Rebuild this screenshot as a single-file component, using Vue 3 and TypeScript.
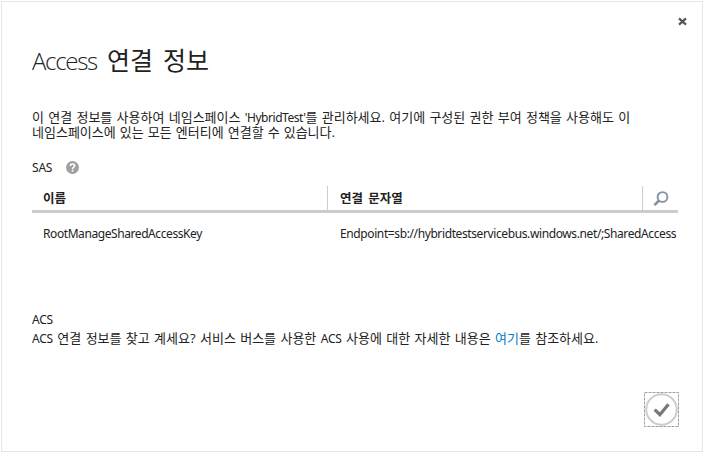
<script setup lang="ts">
interface Credential {
  name: string
  connection: string
}

const credentials: Credential[] = [
  {
    name: 'RootManageSharedAccessKey',
    connection: 'Endpoint=sb://hybridtestservicebus.windows.net/;SharedAccess',
  },
]
</script>

<template>
  <main class="dialog">
    <button class="close" aria-label="닫기">
      <svg width="9" height="9" viewBox="0 0 9 9"><path d="M1 1.4 8 7.6M8 1.4 1 7.6" /></svg>
    </button>
    <h1><span class="light">Access</span> 연결 정보</h1>
    <p class="intro">이 연결 정보를 사용하여 네임스페이스 <span class="latin">'HybridTest'</span>를 관리하세요. 여기에 구성된 권한 부여 정책을 사용해도 이<br /><span class="second">네임스페이스에 있는 모든 엔터티에 연결할 수 있습니다.</span></p>
    <div class="section">
      <span class="latin caps">SAS</span>
      <svg class="help" width="13" height="13" viewBox="0 0 13 13">
        <circle cx="6.5" cy="6.5" r="6.5" fill="#a0a0a0" />
        <path d="M4.4 4.9C4.4 2.4 8.6 2.4 8.6 4.7 8.6 6.2 6.6 6.1 6.6 7.9" fill="none" stroke="#fff" stroke-width="1.7" />
        <rect x="5.7" y="8.8" width="1.8" height="1.7" fill="#fff" />
      </svg>
    </div>
    <div class="table">
      <div class="row head">
        <div class="cell">이름</div>
        <div class="cell divided">연결 문자열</div>
        <div class="search">
          <svg width="16" height="16" viewBox="0 0 16 16">
            <circle cx="9.5" cy="6" r="4.9" />
            <path class="handle" d="M6 9.5 1.4 14.1" />
          </svg>
        </div>
      </div>
      <div v-for="item in credentials" :key="item.name" class="row body">
        <div class="cell latin key">{{ item.name }}</div>
        <div class="cell latin endpoint">{{ item.connection }}</div>
      </div>
    </div>
    <div class="acs">
      <p class="latin caps">ACS</p>
      <p class="info"><span class="latin caps">ACS</span> 연결 정보를 찾고 계세요? 서비스 버스를 사용한 <span class="latin caps">ACS</span> 사용에 대한 자세한 내용은 <a>여기</a>를 참조하세요.</p>
    </div>
    <button class="confirm" aria-label="확인">
      <svg width="35" height="35" viewBox="0 0 35 35">
        <rect x=".5" y=".5" width="34" height="34" fill="none" stroke="#a0a0a0" stroke-dasharray="3 1" />
        <circle cx="17.5" cy="17.5" r="15.3" fill="#fff" stroke="#ccc" stroke-width="2" />
        <path d="M10.7 17.7 15.9 22.7 24.5 12.3" fill="none" stroke="#777" stroke-width="3.2" />
      </svg>
    </button>
  </main>
</template>

<style>
body { margin: 0; padding: 1px; background: #fff; }
</style>

<style scoped>
.dialog {
  position: relative;
  box-sizing: border-box;
  width: 702px;
  height: 451px;
  padding: 42px 24px 0 30px;
  border: 1px solid #e6e6e6;
  overflow: hidden;
  font: 13px/15px "Open Sans", "Noto Sans CJK KR", sans-serif;
  color: #222;
}
p, h1 { margin: 0; white-space: nowrap; }
button { padding: 0; border: 0; background: none; }
.latin { font-family: "Noto Sans", sans-serif; font-size: 12px; letter-spacing: -0.45px; }
.latin.key { letter-spacing: -0.42px; }
.latin.caps { letter-spacing: -0.2px; }
.close { position: absolute; top: 15px; right: 15px; width: 9px; height: 9px; line-height: 0; }
.close path { fill: none; stroke: #555; stroke-width: 2.2; }
h1 { height: 32px; font-size: 25px; line-height: 32px; font-weight: 400; word-spacing: 3.5px; }
.light { font-size: 24px; font-weight: 300; letter-spacing: -1.3px; }
.intro { height: 30px; margin-top: 34px; word-spacing: 0.9px; }
.second { word-spacing: 0.7px; }
.section { display: flex; align-items: center; gap: 14px; height: 15px; margin-top: 20px; }
.table { margin-top: 11px; }
.row { display: grid; grid-template-columns: 295px 315px 36px; }
.head { height: 24px; border-bottom: 3px solid #ccc; font-size: 12.5px; font-weight: 700; line-height: 26px; word-spacing: 2px; }
.cell { padding-left: 11px; white-space: nowrap; }
.divided { padding-left: 12px; border-left: 1px solid #ccc; }
.search { display: flex; justify-content: center; align-items: center; border-left: 1px solid #ccc; }
.search svg { fill: none; stroke: #8291a3; stroke-width: 1.9; }
.search .handle { stroke-width: 2.6; }
.body { height: 42px; line-height: 42px; }
.latin.endpoint { padding-left: 13px; letter-spacing: -0.39px; }
.acs { margin-top: 57px; }
.info { margin-top: 4px; word-spacing: 0.97px; }
a { color: #0079c4; }
.confirm { position: absolute; right: 23px; bottom: 24px; width: 35px; height: 35px; line-height: 0; }
</style>
